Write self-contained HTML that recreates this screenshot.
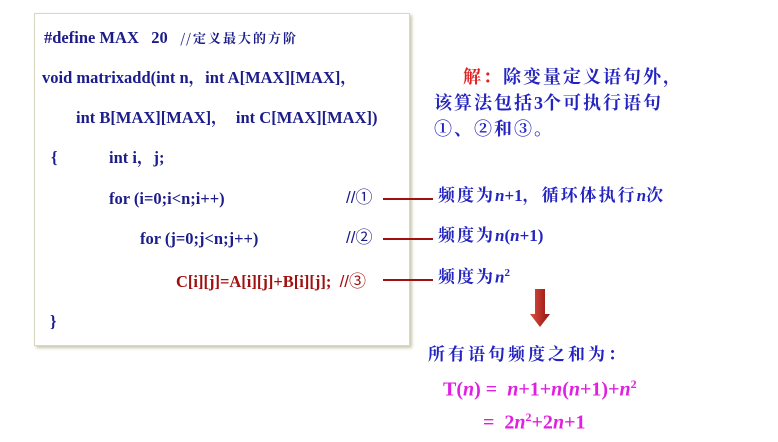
<!DOCTYPE html>
<html><head><meta charset="utf-8"><style>
body{margin:0;width:778px;height:442px;background:#fff;position:relative;overflow:hidden;font-family:"Liberation Serif","Noto Serif CJK SC",serif;}
.box{position:absolute;left:34px;top:13px;width:374px;height:331px;border:1px solid #d8d8c0;box-shadow:2px 2px 3px #c8c8b0;background:#fff}
.t{position:absolute;white-space:nowrap;font-weight:bold;line-height:1}
.c{color:#1c1c8a;font-size:16.5px}
.a{color:#2424c0;font-size:17px;letter-spacing:2px;font-weight:bold;font-family:"Liberation Serif","Noto Serif CJK SC",serif}
.a i,.a b{font-weight:bold;letter-spacing:0}
.m{color:#e020e0;font-size:20px}
.ln{position:absolute;height:2px;background:#a01010;width:50px;left:383px}
i{font-style:italic}
.s{font-family:"Liberation Sans","Noto Sans CJK SC",sans-serif;font-weight:normal}
</style></head><body>
<div class="box"></div>
<div class="t c" style="left:44px;top:30px">#define MAX &nbsp; 20 &nbsp;&nbsp;<span class="s" style="font-size:13px;font-family:'Noto Serif CJK SC',serif;font-weight:bold;letter-spacing:2px">//定义最大的方阶</span></div>
<div class="t c" style="left:42px;top:70px">void matrixadd(int n，int A[MAX][MAX]，</div>
<div class="t c" style="left:76px;top:110px">int B[MAX][MAX]， &nbsp;int C[MAX][MAX])</div>
<div class="t c" style="left:51px;top:150px">{</div>
<div class="t c" style="left:109px;top:150px">int i，j;</div>
<div class="t c" style="left:109px;top:191px">for (i=0;i&lt;n;i++)</div>
<div class="t c s" style="left:346px;top:189px;font-size:17px">//①</div>
<div class="t c" style="left:140px;top:231px">for (j=0;j&lt;n;j++)</div>
<div class="t c s" style="left:346px;top:229px;font-size:17px">//②</div>
<div class="t c" style="left:176px;top:273px;color:#a01010">C[i][j]=A[i][j]+B[i][j]; &nbsp;<span class="s" style="font-size:17px">//③</span></div>
<div class="t c" style="left:50px;top:314px">}</div>
<div class="ln" style="top:198px"></div>
<div class="ln" style="top:238px"></div>
<div class="ln" style="top:279px"></div>
<div class="t a" style="left:438px;top:187px">频度为<i>n</i><b>+1</b>，循环体执行<i>n</i>次</div>
<div class="t a" style="left:438px;top:227px">频度为<i>n</i><b>(</b><i>n</i><b>+1)</b></div>
<div class="t a" style="left:438px;top:268px">频度为<i>n</i><sup style="font-size:11px;font-weight:bold">2</sup></div>
<div class="t a" style="left:463px;top:68px;font-size:18px"><span style="color:#e02020">解：</span>除变量定义语句外，</div>
<div class="t a" style="left:434px;top:94px;font-size:18px">该算法包括<b>3</b>个可执行语句</div>
<div class="t a" style="left:434px;top:120px;font-size:18px">①、②和③。</div>
<svg style="position:absolute;left:530px;top:289px" width="20" height="40"><defs><linearGradient id="g" x1="0" x2="1"><stop offset="0" stop-color="#e05040"/><stop offset="1" stop-color="#901010"/></linearGradient></defs><path d="M5 0H15V25H20L10 38L0 25H5Z" fill="url(#g)"/></svg>
<div class="t a" style="left:428px;top:346px;font-size:17px;letter-spacing:3px">所有语句频度之和为：</div>
<div class="t m" style="left:443px;top:378px">T(<i>n</i>) = &nbsp;<i>n</i>+1+<i>n</i>(<i>n</i>+1)+<i>n</i><sup style="font-size:12px">2</sup></div>
<div class="t m" style="left:483px;top:411px">= &nbsp;2<i>n</i><sup style="font-size:12px">2</sup>+2<i>n</i>+1</div>
</body></html>
